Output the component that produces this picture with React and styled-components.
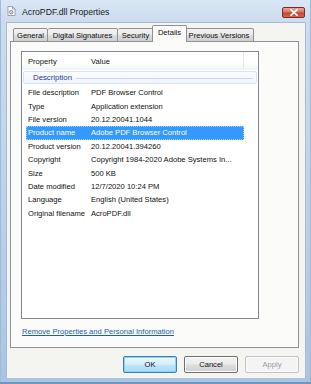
import styled, { createGlobalStyle } from "styled-components";

const GlobalStyle = createGlobalStyle`
  html, body {
    margin: 0;
    padding: 0;
    background: #ffffff;
  }
  body {
    font-family: "Liberation Sans", Arial, sans-serif;
  }
`;

const tabs = [
  { label: "General", w: 35 },
  { label: "Digital Signatures", w: 70 },
  { label: "Security", w: 36 },
  { label: "Details", w: 35, active: true },
  { label: "Previous Versions", w: 69 },
];

const rows = [
  ["File description", "PDF Browser Control"],
  ["Type", "Application extension"],
  ["File version", "20.12.20041.1044"],
  ["Product name", "Adobe PDF Browser Control", true],
  ["Product version", "20.12.20041.394260"],
  ["Copyright", "Copyright 1984-2020 Adobe Systems In..."],
  ["Size", "500 KB"],
  ["Date modified", "12/7/2020 10:24 PM"],
  ["Language", "English (United States)"],
  ["Original filename", "AcroPDF.dll"],
];

const DllIcon = () => (
  <svg width="9" height="10" viewBox="0 0 9 10">
    <path d="M1 0.5h4.5l2.5 2.5v6.5h-7z" fill="#fdfdfd" stroke="#8a8f98" strokeWidth="0.8" />
    <path d="M5.5 0.5v2.5h2.5" fill="none" stroke="#8a8f98" strokeWidth="0.8" />
    <circle cx="4.2" cy="6.2" r="1.7" fill="none" stroke="#6f87a8" strokeWidth="1" />
    <circle cx="4.2" cy="6.2" r="0.5" fill="#6f87a8" />
  </svg>
);

const CloseIcon = () => (
  <svg width="8" height="7" viewBox="0 0 8 7">
    <path d="M1 0.8l6 5.4M7 0.8l-6 5.4" stroke="#ffffff" strokeWidth="1.6" strokeLinecap="square" />
  </svg>
);

const App = () => {
  return (
    <>
      <GlobalStyle />
      <St.Window>
        <St.TitleBar>
          <St.TitleIcon>
            <DllIcon />
          </St.TitleIcon>
          <St.Title>AcroPDF.dll Properties</St.Title>
          <St.CloseButton>
            <CloseIcon />
          </St.CloseButton>
        </St.TitleBar>

        <St.Client>
          <St.TabStrip>
            {tabs.map((tab) => (
              <St.Tab key={tab.label} $w={tab.w} $active={tab.active}>
                {tab.label}
              </St.Tab>
            ))}
          </St.TabStrip>

          <St.Panel>
            <St.ListBox>
              <St.Header>
                <St.HeaderCell $w={63}>Property</St.HeaderCell>
                <St.HeaderCell $w={155} $divider>
                  Value
                </St.HeaderCell>
              </St.Header>

              <St.Group>
                <St.GroupLabel>Description</St.GroupLabel>
                <St.GroupLine />
              </St.Group>

              <St.Rows>
                {rows.map(([name, value, selected]) => (
                  <St.Row key={name} $selected={selected}>
                    <St.NameCell>{name}</St.NameCell>
                    <St.ValueCell>{value}</St.ValueCell>
                  </St.Row>
                ))}
              </St.Rows>
            </St.ListBox>

            <St.Link>Remove Properties and Personal Information</St.Link>
          </St.Panel>

          <St.ButtonRow>
            <St.Button $default>OK</St.Button>
            <St.Button>Cancel</St.Button>
            <St.Button $disabled>Apply</St.Button>
          </St.ButtonRow>
        </St.Client>
      </St.Window>
    </>
  );
};

export default App;

const St = {
  Window: styled.div`
    display: flex;
    flex-direction: column;

    width: 311px;
    height: 384px;
    padding: 0 5px 6px 6px;
    box-sizing: border-box;

    background: linear-gradient(180deg, #d9e6f4 0px, #cbdcef 22px, #bcd2ea 200px, #a9c4e2 384px);
    box-shadow: inset 0 -2px 0 #6f97bd, inset 1px 0 0 #9fbbd9, inset -1px 0 0 #9fbbd9;
  `,

  TitleBar: styled.div`
    display: flex;
    align-items: center;

    height: 22px;
    padding-left: 1px;
  `,

  TitleIcon: styled.span`
    display: flex;
    width: 9px;
    height: 10px;
    margin-right: 6px;
  `,

  Title: styled.span`
    flex: 1;

    font-size: 8.7px;
    color: #1a1a1a;
    padding-top: 1px;
  `,

  CloseButton: styled.span`
    display: flex;
    align-items: center;
    justify-content: center;

    width: 23px;
    height: 11px;
    margin-right: 1px;
    margin-top: 3px;

    border: 1px solid #7a2a1f;
    border-radius: 2px;
    background: linear-gradient(180deg, #eaa89a 0%, #d67561 45%, #c4432c 55%, #d5684f 100%);
    box-sizing: border-box;
  `,

  Client: styled.div`
    display: flex;
    flex-direction: column;
    flex: 1;

    padding: 3px 6px 0 3px;

    background: #f4f4f1;
    border: 1px solid #a4bcd6;
    border-bottom: none;
  `,

  TabStrip: styled.div`
    display: flex;
    align-items: flex-end;

    height: 16px;
    padding-left: 3px;
    margin-bottom: -1px;
    position: relative;
    z-index: 1;
  `,

  Tab: styled.div`
    display: flex;
    align-items: center;
    justify-content: center;

    width: ${({ $w }) => $w}px;
    height: ${({ $active }) => ($active ? 17 : 14)}px;
    margin: ${({ $active }) => ($active ? "0 -2px" : "0")};
    box-sizing: border-box;

    font-size: 7.6px;
    color: #111;
    white-space: nowrap;

    border: 1px solid #8e9199;
    border-left-width: ${({ $active }) => ($active ? 1 : 0)}px;
    border-bottom: ${({ $active }) => ($active ? "none" : "1px solid #8e9199")};
    border-radius: 2px 2px 0 0;
    background: ${({ $active }) =>
      $active
        ? "#fbfbf9"
        : "linear-gradient(180deg, #f3f3f3 0%, #ebebeb 45%, #dcdcdc 55%, #cfcfcf 100%)"};
    padding-bottom: ${({ $active }) => ($active ? 3 : 0)}px;
    position: relative;
    z-index: ${({ $active }) => ($active ? 2 : 1)};

    &:first-child {
      border-left-width: 1px;
    }
  `,

  Panel: styled.div`
    display: flex;
    flex-direction: column;

    height: 307px;
    padding: 9px 0 0 10px;
    box-sizing: border-box;

    background: #fbfbf9;
    border: 1px solid #8e9199;
  `,

  ListBox: styled.div`
    display: flex;
    flex-direction: column;

    width: 238px;
    height: 268px;
    box-sizing: border-box;

    background: #ffffff;
    border: 1px solid #828790;
  `,

  Header: styled.div`
    display: flex;
    align-items: center;

    height: 18px;
    padding-left: 4px;

    background: linear-gradient(180deg, #ffffff 0%, #ffffff 55%, #f1f5f6 100%);
  `,

  HeaderCell: styled.div`
    display: flex;
    align-items: center;

    width: ${({ $w }) => $w}px;
    height: 100%;
    padding-left: 2px;
    box-sizing: border-box;

    font-size: 7.6px;
    color: #111;

    border-right: ${({ $divider }) => ($divider ? "1px solid #e3e8ec" : "none")};
  `,

  Group: styled.div`
    display: flex;
    align-items: center;
    gap: 4px;

    height: 13px;
    margin: 1px 1px 0 1px;
    padding: 0 3px 0 9px;
    box-sizing: border-box;

    border: 1px solid #d9e3f3;
    border-radius: 2px;
    background: linear-gradient(180deg, #fbfcff 0%, #f1f4fc 100%);
  `,

  GroupLabel: styled.span`
    font-size: 7.8px;
    color: #1e3a8f;
  `,

  GroupLine: styled.span`
    flex: 1;
    height: 1px;
    margin-top: 1px;
    background: #c9d6ee;
  `,

  Rows: styled.div`
    display: flex;
    flex-direction: column;
    padding: 2px 0 0 4px;
  `,

  Row: styled.div`
    display: flex;
    align-items: center;

    width: 218px;
    height: 13.4px;

    font-size: 7.6px;
    color: ${({ $selected }) => ($selected ? "#ffffff" : "#111111")};
    background: ${({ $selected }) => ($selected ? "#3399ff" : "transparent")};
    outline: ${({ $selected }) => ($selected ? "1px dotted #9fd0ff" : "none")};
    outline-offset: -1px;
    white-space: nowrap;
  `,

  NameCell: styled.span`
    width: 63px;
    padding-left: 2px;
    box-sizing: border-box;
  `,

  ValueCell: styled.span`
    flex: 1;
    padding-left: 2px;
  `,

  Link: styled.span`
    margin-top: 8px;
    padding-left: 1px;

    font-size: 7.6px;
    color: #1d5fb2;
    text-decoration: underline;
  `,

  ButtonRow: styled.div`
    display: flex;
    justify-content: flex-end;
    gap: 7px;

    margin-top: 8px;
  `,

  Button: styled.div`
    display: flex;
    align-items: center;
    justify-content: center;

    width: 54px;
    height: 17px;
    box-sizing: border-box;

    font-size: 7.6px;
    color: ${({ $disabled }) => ($disabled ? "#9a9a9a" : "#111")};

    border: 1px solid ${({ $default, $disabled }) =>
      $default ? "#3c7fb1" : $disabled ? "#bfc3c8" : "#707070"};
    border-radius: 2px;
    background: ${({ $default, $disabled }) =>
      $disabled
        ? "#f4f4f4"
        : $default
        ? "linear-gradient(180deg, #eaf6fd 0%, #d9f0fc 45%, #bee6fd 55%, #a7d9f5 100%)"
        : "linear-gradient(180deg, #f2f2f2 0%, #ebebeb 45%, #dddddd 55%, #cfcfcf 100%)"};
    box-shadow: ${({ $default }) => ($default ? "inset 0 0 0 1px #90d3f6" : "inset 0 0 0 1px #fcfcfc")};
  `,
};
